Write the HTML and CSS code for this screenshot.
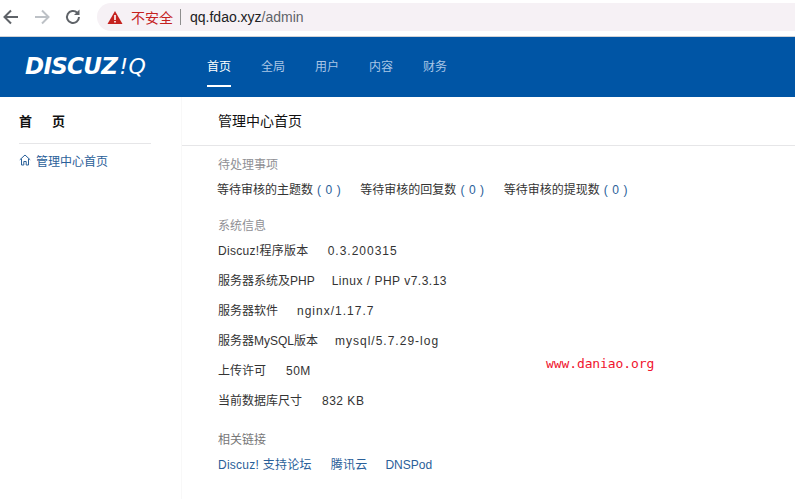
FILE: index.html
```html
<!DOCTYPE html>
<html lang="zh-CN">
<head>
<meta charset="utf-8">
<title>Discuz! Q</title>
<link rel="stylesheet" href="styles.css">
</head>
<body>
<div class="chrome">
  <svg class="nav-icon" width="20" height="20" viewBox="0 0 20 20"><path d="M17 10H4M10 3.5 3.5 10l6.5 6.5" fill="none" stroke="#5f6368" stroke-width="2"/></svg>
  <svg class="nav-icon" width="20" height="20" viewBox="0 0 20 20"><path d="M3 10h13M10 3.5 16.500 10 10 16.500" fill="none" stroke="#bdc1c6" stroke-width="2"/></svg>
  <svg class="nav-icon" width="20" height="20" viewBox="0 0 20 20"><path d="M16 10a6 6 0 1 1-1.800-4.300" fill="none" stroke="#5f6368" stroke-width="2"/><path d="M16.500 2.500v5.500H11z" fill="#5f6368"/></svg>
  <div class="address">
    <svg class="warn" width="16" height="15" viewBox="0 0 16 15"><path d="M8 1 15.500 14H.5z" fill="#c5221f"/><path d="M7.200 5h1.600v5H7.200zM7.200 11h1.600v1.600H7.200z" fill="#fff"/></svg>
    <span class="insecure">不安全</span>
    <span class="sep"></span>
    <span class="url">qq.fdao.xyz<span class="url-path">/admin</span></span>
  </div>
</div>
<header class="topbar">
  <div class="logo">DISCUZ<span class="logo-tail">!Q</span></div>
  <nav class="topnav">
    <a class="topnav-item active">首页</a>
    <a class="topnav-item">全局</a>
    <a class="topnav-item">用户</a>
    <a class="topnav-item">内容</a>
    <a class="topnav-item">财务</a>
  </nav>
</header>
<div class="layout">
  <aside class="sidebar">
    <h2 class="side-title">首<span class="gap"></span>页</h2>
    <a class="side-link">
      <svg width="12" height="12" viewBox="0 0 12 12"><path d="M.8 5.800 6 1l5.200 4.800M2.500 4.800V11h2.300V7.500h2.400V11h2.300V4.800" fill="none" stroke="#2a6099" stroke-width="1"/></svg>
      管理中心首页
    </a>
  </aside>
  <main class="main">
    <h1 class="page-title">管理中心首页</h1>
    <div class="content">
      <h3 class="label first">待处理事项</h3>
      <div class="pending">
        <span>等待审核的主题数<span class="count">( 0 )</span></span>
        <span>等待审核的回复数<span class="count">( 0 )</span></span>
        <span>等待审核的提现数<span class="count">( 0 )</span></span>
      </div>
      <h3 class="label sys">系统信息</h3>
      <div class="info-list">
        <div class="info"><span class="key">Discuz!程序版本</span><span class="val wide">0.3.200315</span></div>
        <div class="info near"><span>服务器系统及PHP</span><span class="val">Linux / PHP v7.3.13</span></div>
        <div class="info"><span>服务器软件</span><span class="val wide">nginx/1.17.7</span></div>
        <div class="info near"><span>服务器MySQL版本</span><span class="val wide">mysql/5.7.29-log</span></div>
        <div class="info far"><span>上传许可</span><span class="val">50M</span></div>
        <div class="info far"><span>当前数据库尺寸</span><span class="val">832 KB</span></div>
      </div>
      <h3 class="label links-label">相关链接</h3>
      <div class="links"><a>Discuz! 支持论坛</a><a>腾讯云</a><a class="link-tight">DNSPod</a></div>
    </div>
    <div class="watermark">www.daniao.org</div>
  </main>
</div>
</body>
</html>
```
FILE: styles.css
```css
* { box-sizing: border-box; }
html, body { margin: 0; height: 100%; overflow: hidden; }
body {
  background: #fff;
  color: #333;
  font-family: "Liberation Sans", "Noto Sans CJK SC", sans-serif;
  font-size: 12px;
}
.chrome {
  height: 37px;
  display: flex;
  align-items: flex-start;
  padding: 7px 0 0 1px;
  gap: 11px;
  border-bottom: 1px solid #d0d2d6;
}
.nav-icon { flex: none; }
.address {
  flex: 1;
  height: 28px;
  margin: -4px 0 0 3px;
  padding-left: 10px;
  background: #f6f1f5;
  border-radius: 14px 0 0 14px;
  display: flex;
  align-items: center;
}
.warn { flex: none; }
.insecure { margin-left: 8px; font-size: 14px; color: #c5221f; }
.sep { width: 1px; height: 16px; margin: 0 9px 0 7px; background: #8e8e8e; }
.url { font-size: 14px; color: #202124; }
.url-path { color: #5f6368; }
.topbar {
  height: 60px;
  background: #0055a5;
  display: flex;
  align-items: center;
}
.logo {
  width: 207px;
  padding: 0 0 2px 25px;
  color: #fff;
  font-family: "DejaVu Sans", sans-serif;
  font-size: 23px;
  font-style: italic;
  font-weight: 700;
  letter-spacing: -.7px;
}
.logo-tail { font-size: 22px; font-weight: 400; letter-spacing: .5px; margin-left: 2px; }
.topnav { display: flex; gap: 30px; align-self: stretch; }
.topnav-item {
  width: 24px;
  display: flex;
  align-items: center;
  justify-content: center;
  font-size: 12px;
  white-space: nowrap;
  color: #a9c6e6;
  border-bottom: 2px solid transparent;
  height: 50px;
  padding-top: 9px;
}
.topnav-item.active { color: #fff; border-bottom-color: #fff; }
.layout { display: flex; height: 402px; }
.sidebar {
  width: 182px;
  flex: none;
  padding: 0 30px 0 19px;
  border-right: 1px solid #f8f8f8;
}
.side-title {
  margin: 0;
  height: 47px;
  line-height: 49px;
  font-size: 13px;
  font-weight: 700;
  color: #111;
  border-bottom: 1px solid #e6e6e8;
}
.gap { display: inline-block; width: 20px; }
.side-link {
  display: flex;
  align-items: center;
  gap: 5px;
  margin-top: 8px;
  height: 16px;
  color: #2a6099;
}
.main { flex: 1; position: relative; }
.page-title {
  margin: 0;
  height: 49px;
  padding-left: 36px;
  line-height: 48px;
  font-size: 14px;
  font-weight: 400;
  color: #111;
  border-bottom: 1px solid #e6e6e8;
}
.content { padding-left: 36px; }
.label { margin: 0; font-size: 12px; line-height: 16px; font-weight: 400; color: #8f8f94; }
.first { margin-top: 11px; }
.pending { display: flex; gap: 19px; margin-top: 9px; line-height: 16px; margin-left: -1px; }
.count { color: #2a6099; margin-left: 4px; letter-spacing: .6px; }
.sys { margin-top: 20px; }
.info-list { margin-top: 9px; display: flex; flex-direction: column; gap: 14px; }
.info { display: flex; gap: 19px; line-height: 16px; color: #333; }
.info.near { gap: 17px; }
.info.far { gap: 20px; }
.key { letter-spacing: .3px; }
.val { letter-spacing: .5px; }
.val.wide { letter-spacing: 1px; }
.links-label { margin-top: 23px; color: #777; }
.links { display: flex; gap: 19px; margin-top: 9px; line-height: 16px; color: #2a6099; letter-spacing: .25px; }
.link-tight { letter-spacing: 0; margin-left: -1px; }
.watermark {
  position: absolute;
  left: 364px;
  top: 259px;
  font-family: "DejaVu Sans Mono", monospace;
  font-size: 13px;
  letter-spacing: -.1px;
  color: #f0142e;
}
```
